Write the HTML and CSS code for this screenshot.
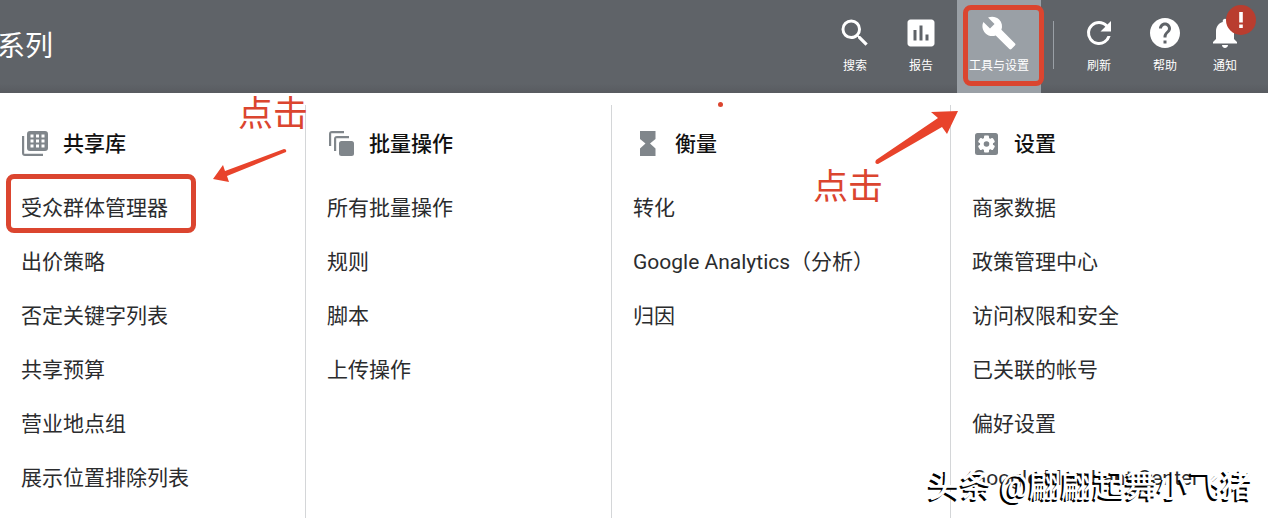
FILE: index.html
```html
<!DOCTYPE html>
<html lang="zh-CN">
<head>
  <meta charset="UTF-8">
  <meta name="viewport" content="width=device-width, initial-scale=1.0">
  <title>工具与设置</title>
  <link rel="stylesheet" href="styles.css">
</head>
<body>

  <!-- Top bar -->
  <header class="topbar">
    <h1 class="page-title">系列</h1>
    <nav class="tools">
      <button type="button" class="tool">
        <svg class="tool-icon" viewBox="0 0 24 24"><path d="M15.5 14h-.79l-.28-.27A6.47 6.47 0 0 0 16 9.5 6.5 6.5 0 1 0 9.5 16c1.61 0 3.09-.59 4.23-1.57l.27.28v.79l5 4.99L20.49 19l-4.99-5zm-6 0C7.01 14 5 11.99 5 9.5S7.01 5 9.5 5 14 7.01 14 9.5 11.99 14 9.5 14z"/></svg>
        <span>搜索</span>
      </button>
      <button type="button" class="tool">
        <svg class="tool-icon" viewBox="0 0 24 24"><path d="M19 3H5c-1.1 0-2 .9-2 2v14c0 1.1.9 2 2 2h14c1.1 0 2-.9 2-2V5c0-1.1-.9-2-2-2zM9 17H7v-7h2v7zm4 0h-2V7h2v10zm4 0h-2v-4h2v4z"/></svg>
        <span>报告</span>
      </button>
      <button type="button" class="tool tool-active">
        <svg class="tool-icon" viewBox="0 0 24 24"><path d="M22.7 19l-9.1-9.1c.9-2.3.4-5-1.5-6.9-2-2-5-2.4-7.4-1.3L9 6 6 9 1.6 4.7C.4 7.1.9 10.1 2.9 12.1c1.9 1.9 4.6 2.4 6.9 1.5l9.1 9.1c.4.4 1 .4 1.4 0l2.3-2.3c.5-.4.5-1.1.1-1.4z"/></svg>
        <span>工具与设置</span>
      </button>
      <span class="divider"></span>
      <button type="button" class="tool">
        <svg class="tool-icon" viewBox="0 0 24 24"><path d="M17.65 6.35A7.96 7.96 0 0 0 12 4a8 8 0 1 0 7.73 10h-2.08A6 6 0 1 1 12 6c1.66 0 3.14.69 4.22 1.78L13 11h7V4l-2.35 2.35z"/></svg>
        <span>刷新</span>
      </button>
      <button type="button" class="tool">
        <svg class="tool-icon" viewBox="0 0 24 24"><path d="M12 2C6.48 2 2 6.48 2 12s4.48 10 10 10 10-4.48 10-10S17.52 2 12 2zm1 17h-2v-2h2v2zm2.07-7.75l-.9.92C13.45 12.9 13 13.5 13 15h-2v-.5c0-1.1.45-2.1 1.17-2.83l1.24-1.26c.37-.36.59-.86.59-1.41 0-1.1-.9-2-2-2s-2 .9-2 2H8c0-2.21 1.79-4 4-4s4 1.79 4 4c0 .88-.36 1.68-.93 2.25z"/></svg>
        <span>帮助</span>
      </button>
      <button type="button" class="tool tool-notice">
        <svg class="tool-icon" viewBox="0 0 24 24"><path d="M12 22c1.1 0 2-.9 2-2h-4c0 1.1.89 2 2 2zm6-6v-5c0-3.07-1.64-5.64-4.5-6.32V4c0-.83-.67-1.5-1.5-1.5s-1.5.67-1.5 1.5v.68C7.63 5.36 6 7.92 6 11v5l-2 2v1h16v-1l-2-2z"/></svg>
        <span>通知</span>
        <svg class="badge" viewBox="0 0 30 30"><circle cx="15" cy="15" r="15"/><path d="M13.2 7h3.6v10.500h-3.600zM13.200 19.500h3.600v3.500h-3.600z"/></svg>
      </button>
    </nav>
  </header>

  <!-- Menu panel -->
  <main class="menu">
    <section class="menu-col">
      <h2 class="menu-title">
        <svg class="menu-icon" viewBox="0 0 28 28"><path fill-rule="evenodd" d="M9 1h15a3 3 0 0 1 3 3v14a3 3 0 0 1-3 3H9a3 3 0 0 1-3-3V4a3 3 0 0 1 3-3zM9.500 4.500v3h3v-3zM15 4.500v3h3v-3zM20.500 4.500v3h3v-3zM9.500 9.500v3h3v-3zM15 9.500v3h3v-3zM20.500 9.500v3h3v-3zM9.500 14.500v3h3v-3zM15 14.500v3h3v-3zM20.500 14.500v3h3v-3z"/><path d="M1 6h2.200v17.800H22V26H4a3 3 0 0 1-3-3z"/></svg>
        <span>共享库</span>
      </h2>
      <ul class="menu-list">
        <li class="marked"><a href="#">受众群体管理器</a></li>
        <li><a href="#">出价策略</a></li>
        <li><a href="#">否定关键字列表</a></li>
        <li><a href="#">共享预算</a></li>
        <li><a href="#">营业地点组</a></li>
        <li><a href="#">展示位置排除列表</a></li>
      </ul>
    </section>

    <section class="menu-col">
      <h2 class="menu-title">
        <svg class="menu-icon" viewBox="0 0 28 28"><rect x="12" y="11" width="15" height="15" rx="2.500"/><path d="M2 16V4a3 3 0 0 1 3-3h12v2.200H4.200V16zM7 21V9a3 3 0 0 1 3-3h12v2.200H9.200V21z"/></svg>
        <span>批量操作</span>
      </h2>
      <ul class="menu-list">
        <li><a href="#">所有批量操作</a></li>
        <li><a href="#">规则</a></li>
        <li><a href="#">脚本</a></li>
        <li><a href="#">上传操作</a></li>
      </ul>
    </section>

    <section class="menu-col">
      <h2 class="menu-title">
        <svg class="menu-icon" viewBox="0 0 28 28"><path d="M7 1h15.500v8L17 13.500l5.500 5V26H7v-7.500l5.500-5L7 9z"/></svg>
        <span>衡量</span>
      </h2>
      <ul class="menu-list">
        <li><a href="#">转化</a></li>
        <li><a href="#">Google Analytics（分析）</a></li>
        <li><a href="#">归因</a></li>
      </ul>
    </section>

    <section class="menu-col">
      <h2 class="menu-title">
        <svg class="menu-icon" viewBox="0 0 28 28"><rect x="3" y="3" width="23" height="22" rx="2.500"/><g class="gear"><rect x="12" y="5.500" width="5" height="17" rx="1"/><rect x="12" y="5.500" width="5" height="17" rx="1" transform="rotate(60 14.500 14)"/><rect x="12" y="5.500" width="5" height="17" rx="1" transform="rotate(120 14.500 14)"/><circle cx="14.500" cy="14" r="6.500"/></g><circle cx="14.500" cy="14" r="2.800"/></svg>
        <span>设置</span>
      </h2>
      <ul class="menu-list">
        <li><a href="#">商家数据</a></li>
        <li><a href="#">政策管理中心</a></li>
        <li><a href="#">访问权限和安全</a></li>
        <li><a href="#">已关联的帐号</a></li>
        <li><a href="#">偏好设置</a></li>
        <li><a href="#">Google Merchant Center</a></li>
      </ul>
    </section>
  </main>

  <!-- Red notes drawn over the menu -->
  <span class="note note-library">点击</span>
  <span class="note note-tools">点击</span>
  <svg class="arrow arrow-library" viewBox="0 0 76 36"><path d="M1 31L11 17l2 6L72 1q3 0 2 3L15 28l2 6z"/></svg>
  <svg class="arrow arrow-tools" viewBox="0 0 86 56"><path d="M84 1L57 2l7 6L2 50q-2 4 2 4L68 17l5 7z"/></svg>
  <span class="dot"></span>

  <div class="watermark">头条 @翩翩起舞小飞猪</div>

</body>
</html>
```
FILE: styles.css
```css
*,
*::after {
  margin: 0;
  padding: 0;
  box-sizing: border-box;
}

body {
  position: relative;
  min-height: 100vh;
  display: flex;
  flex-direction: column;
  overflow: hidden;
  background-color: #fff;
  color: #2b2c2e;
  font-family: Roboto, "Noto Sans CJK SC", sans-serif;
}

/* top bar */
.topbar {
  display: flex;
  justify-content: space-between;
  height: 93px;
  padding-right: 16px;
  background: linear-gradient(#5f6368 90%, #585b60);
  color: #fff;
}

.page-title {
  margin-left: -3px;
  font-size: 28px;
  font-weight: 400;
  line-height: 93px;
}

.tools {
  display: flex;
}

.tool {
  position: relative;
  display: flex;
  flex-direction: column;
  align-items: center;
  width: 66px;
  padding-top: 15px;
  border: none;
  background: none;
  color: #fff;
  font-family: inherit;
  font-size: 12px;
  line-height: 18px;
  white-space: nowrap;
  cursor: pointer;
}

.tool-icon {
  width: 36px;
  height: 36px;
  margin-bottom: 6px;
  fill: currentColor;
}

.tool-active {
  width: 84px;
  margin-left: 3px;
  background-color: #9aa0a6;
}

.tool-active::after,
.marked::after {
  content: "";
  position: absolute;
  border: 5px solid #db452f;
  border-radius: 8px;
}

.tool-active::after {
  top: 5px;
  left: 6px;
  width: 81px;
  height: 81px;
}

.tool-notice {
  width: 54px;
}

.badge {
  position: absolute;
  top: 5px;
  left: 28px;
  width: 30px;
  height: 30px;
}

.badge circle {
  fill: #b93d2f;
}

.badge path {
  fill: #fff;
}

.divider {
  width: 1px;
  height: 48px;
  margin: 21px 12px 0;
  background-color: #9aa0a6;
}

/* menu */
.menu {
  flex: 1;
  display: grid;
  grid-template-columns: 306fr 306fr 339fr 317fr;
  padding-top: 12px;
}

.menu-col {
  padding-left: 21px;
  border-right: 1px solid #d4d6d8;
}

.menu-col:last-child {
  border-right: none;
}

.menu-title {
  display: flex;
  align-items: center;
  gap: 14px;
  height: 30px;
  margin: 24px 0 22px;
  color: #111;
  font-size: 21px;
  font-weight: 500;
  line-height: 28px;
}

.menu-icon {
  width: 28px;
  height: 28px;
  fill: #80868b;
}

.gear {
  fill: #fff;
}

.menu-list {
  list-style: none;
}

.menu-list li {
  position: relative;
  height: 54px;
  font-size: 21px;
  line-height: 54px;
  white-space: nowrap;
}

.menu-list a {
  color: inherit;
  text-decoration: none;
}

.marked::after {
  top: -7px;
  left: -15px;
  width: 190px;
  height: 59px;
}

/* notes */
.note {
  position: absolute;
  color: #db452f;
  font-size: 35px;
  line-height: 40px;
}

.note-library {
  top: 95px;
  left: 238px;
}

.note-tools {
  top: 168px;
  left: 813px;
}

.arrow {
  position: absolute;
  fill: #e8432b;
}

.arrow-library {
  top: 148px;
  left: 212px;
  width: 76px;
  height: 36px;
}

.arrow-tools {
  top: 110px;
  left: 874px;
  width: 86px;
  height: 56px;
}

.dot {
  position: absolute;
  top: 102px;
  left: 718px;
  width: 5px;
  height: 5px;
  border-radius: 50%;
  background-color: #db452f;
}

.watermark {
  position: absolute;
  right: 15px;
  bottom: 9px;
  color: #fff;
  font-size: 32px;
  font-weight: 500;
  line-height: 46px;
  text-shadow: -2px 2px 0 #000;
}
```
